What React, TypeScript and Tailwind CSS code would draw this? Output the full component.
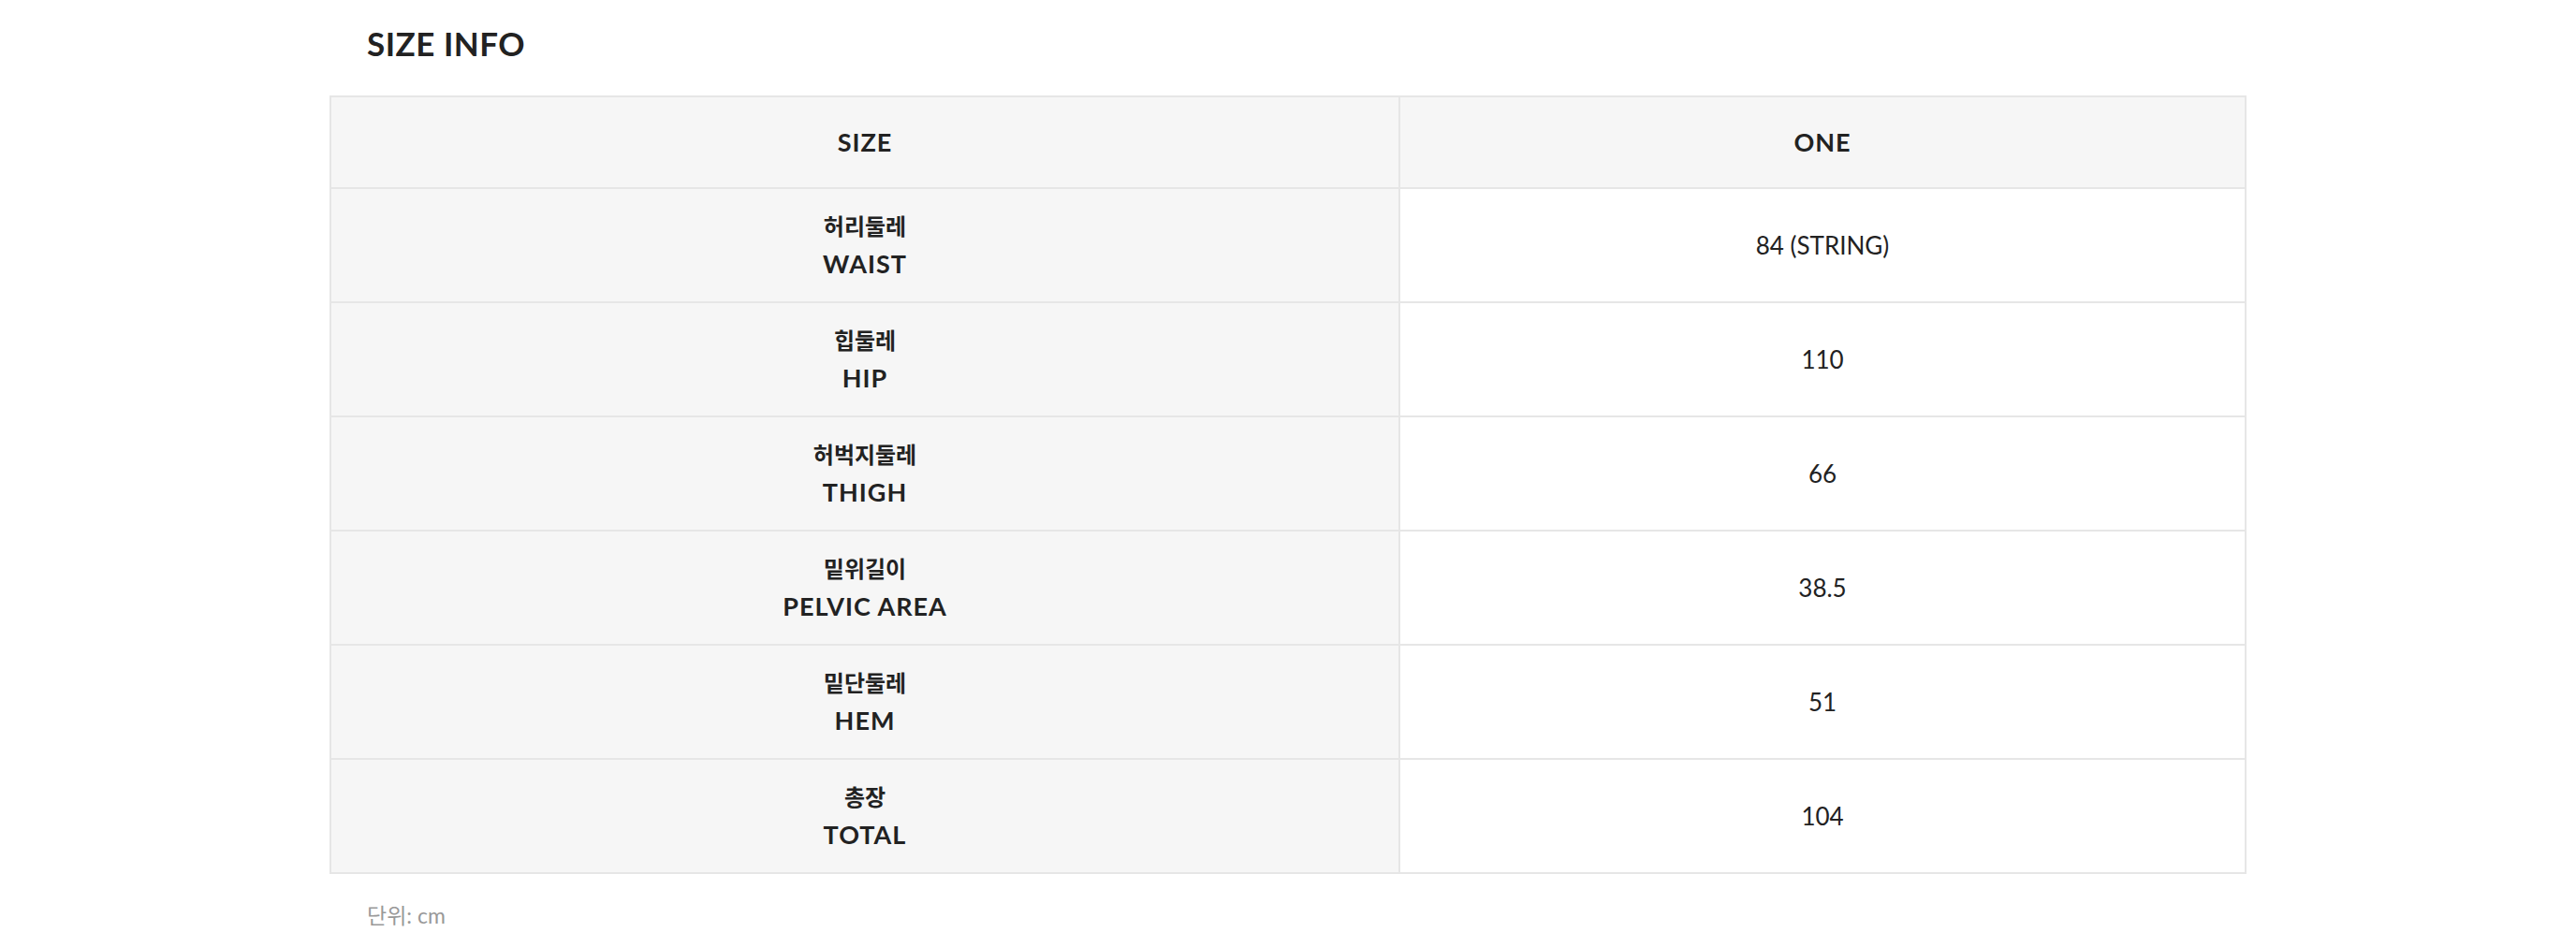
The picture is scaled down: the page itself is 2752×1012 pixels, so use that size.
const ROWS = [
  { ko: "허리둘레", en: "WAIST", value: "84 (STRING)" },
  { ko: "힙둘레", en: "HIP", value: "110" },
  { ko: "허벅지둘레", en: "THIGH", value: "66" },
  { ko: "밑위길이", en: "PELVIC AREA", value: "38.5" },
  { ko: "밑단둘레", en: "HEM", value: "51" },
  { ko: "총장", en: "TOTAL", value: "104" },
];

export default function App() {
  return (
    <div className="min-h-screen bg-white text-[#222] font-['Lato','Noto_Sans_CJK_KR',sans-serif]">
      <div className="w-[2048px] mx-auto pt-[26px]">
        <h2 className="pl-[40px] text-[35px] leading-[40px] font-bold tracking-[0.5px]">SIZE INFO</h2>

        <table className="mt-[36px] w-full border-collapse table-fixed">
          <thead>
            <tr className="bg-[#f6f6f6]">
              <th className="w-[1142px] h-[98px] border-2 border-[#e6e6e6] text-[27px] font-bold tracking-[1px]">
                SIZE
              </th>
              <th className="border-2 border-[#e6e6e6] text-[27px] font-bold tracking-[1px]">ONE</th>
            </tr>
          </thead>
          <tbody>
            {ROWS.map((r) => (
              <tr key={r.en}>
                <td className="h-[122px] bg-[#f6f6f6] border-2 border-[#e6e6e6] text-center font-bold">
                  <div className="text-[24px] leading-[40px]">{r.ko}</div>
                  <div className="text-[27px] leading-[40px] tracking-[1px]">{r.en}</div>
                </td>
                <td className="bg-white border-2 border-[#e6e6e6] text-center text-[26px] leading-[40px]">
                  {r.value}
                </td>
              </tr>
            ))}
          </tbody>
        </table>

        <p className="mt-[24px] pl-[40px] text-[23px] leading-[40px] text-[#999]">단위: cm</p>
      </div>
    </div>
  );
}
